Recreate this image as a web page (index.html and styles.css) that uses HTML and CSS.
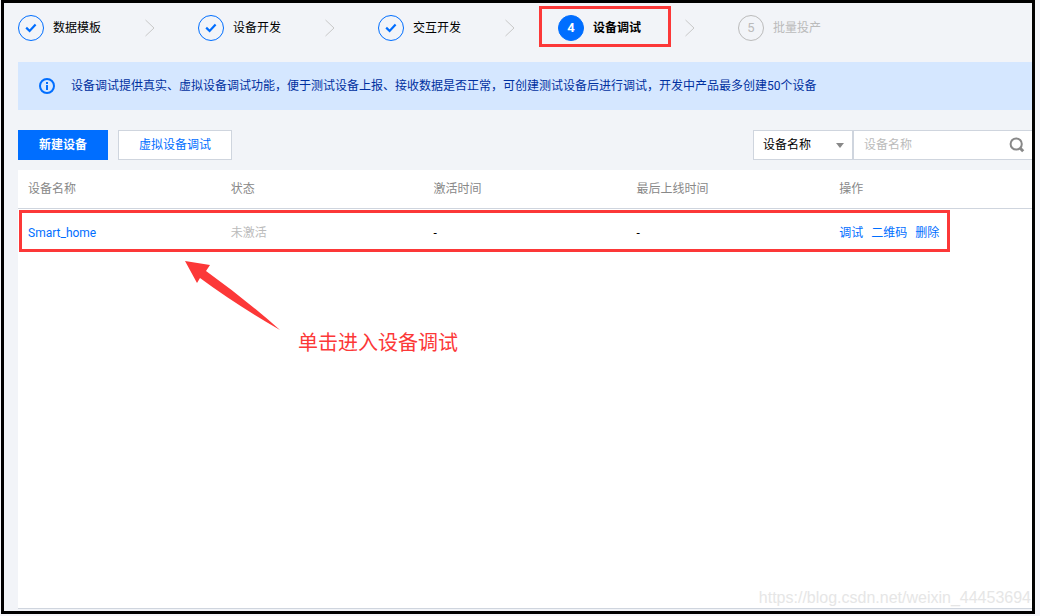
FILE: index.html
```html
<!DOCTYPE html>
<html lang="zh-CN">
<head>
<meta charset="utf-8">
<title>设备调试</title>
<link rel="stylesheet" href="styles.css">
</head>
<body>
<main class="frame">
  <ol class="steps">
    <li class="step done">
      <span class="step-mark"><svg width="12" height="10" viewBox="0 0 12 10"><path d="M1.2 4.6 4.6 8 10.6 1.6"/></svg></span>
      <span class="step-name">数据模板</span>
      <svg class="chevron" width="10" height="18" viewBox="0 0 10 18"><path d="M0.5 1 9 9 0.5 17"/></svg>
    </li>
    <li class="step done">
      <span class="step-mark"><svg width="12" height="10" viewBox="0 0 12 10"><path d="M1.2 4.6 4.6 8 10.6 1.6"/></svg></span>
      <span class="step-name">设备开发</span>
      <svg class="chevron" width="10" height="18" viewBox="0 0 10 18"><path d="M0.5 1 9 9 0.5 17"/></svg>
    </li>
    <li class="step done">
      <span class="step-mark"><svg width="12" height="10" viewBox="0 0 12 10"><path d="M1.2 4.6 4.6 8 10.6 1.6"/></svg></span>
      <span class="step-name">交互开发</span>
      <svg class="chevron" width="10" height="18" viewBox="0 0 10 18"><path d="M0.5 1 9 9 0.5 17"/></svg>
    </li>
    <li class="step current">
      <span class="step-mark">4</span>
      <span class="step-name">设备调试</span>
      <svg class="chevron" width="10" height="18" viewBox="0 0 10 18"><path d="M0.5 1 9 9 0.5 17"/></svg>
    </li>
    <li class="step pending">
      <span class="step-mark">5</span>
      <span class="step-name">批量投产</span>
    </li>
  </ol>

  <div class="notice">
    <svg class="notice-icon" width="16" height="16" viewBox="0 0 16 16"><circle cx="8" cy="8" r="7"/><path d="M8 4v2M8 7v5"/></svg>
    <p class="notice-text">设备调试提供真实、虚拟设备调试功能，便于测试设备上报、接收数据是否正常，可创建测试设备后进行调试，开发中产品最多创建50个设备</p>
  </div>

  <div class="toolbar">
    <button class="btn primary" type="button">新建设备</button>
    <button class="btn" type="button">虚拟设备调试</button>
    <form class="search">
      <div class="search-field">
        <select class="search-select" aria-label="搜索字段"><option>设备名称</option></select>
        <svg class="caret" width="8" height="5" viewBox="0 0 8 5"><path d="M0 0h8L4 5z"/></svg>
      </div>
      <div class="search-box">
        <input class="search-input" type="text" placeholder="设备名称" aria-label="设备名称">
        <button class="search-btn" type="button" aria-label="搜索"><svg width="16" height="16" viewBox="0 0 16 16"><circle cx="7.2" cy="7" r="5.6"/><path class="handle" d="M11 11 14.2 14.2"/></svg></button>
      </div>
    </form>
  </div>

  <section class="card">
    <table class="devices">
      <thead>
        <tr><th>设备名称</th><th>状态</th><th>激活时间</th><th>最后上线时间</th><th>操作</th></tr>
      </thead>
      <tbody>
        <tr>
          <td><a href="#">Smart_home</a></td>
          <td class="inactive">未激活</td>
          <td>-</td>
          <td>-</td>
          <td><span class="actions"><a href="#">调试</a><a href="#">二维码</a><a href="#">删除</a></span></td>
        </tr>
      </tbody>
    </table>
    <div class="row-highlight"></div>
    <div class="hint">
      <svg class="hint-arrow" width="96" height="70" viewBox="0 0 96 70"><path d="M0 0 25 4 21 10 Q60 38 95 69 Q50 43 15 17L12 22z"/></svg>
      <p class="hint-text">单击进入设备调试</p>
    </div>
    <p class="watermark">https://blog.csdn.net/weixin_44453694</p>
  </section>
</main>
</body>
</html>
```
FILE: styles.css
```css
* {
  box-sizing: border-box;
}

body {
  margin: 0;
  padding: 0 5px 2px 1px;
  min-height: 100vh;
  display: flex;
  background: #f5f6fa;
  color: #000;
  font: 12px/18px Roboto, "Noto Sans CJK SC", sans-serif;
}

p {
  margin: 0;
}

a {
  color: #006eff;
  text-decoration: none;
}

button,
input,
select {
  font: inherit;
}

.frame {
  flex: 1;
  min-width: 0;
  display: flex;
  flex-direction: column;
  border: 3px solid #000;
  padding: 12px 0 2px 14px;
  background: #f2f4f8;
}

/* Steps */
.steps {
  display: flex;
  margin: 0 0 21px;
  padding: 0;
  list-style: none;
}

.step {
  position: relative;
  flex: 0 0 180px;
  display: flex;
  align-items: center;
}

.step-mark {
  width: 26px;
  height: 26px;
  display: flex;
  align-items: center;
  justify-content: center;
  margin-right: 9px;
  border: 1px solid #006eff;
  border-radius: 50%;
  font-size: 13px;
}

.step-mark path {
  fill: none;
  stroke: #006eff;
  stroke-width: 2.2;
}

.chevron {
  margin-left: auto;
  margin-right: 43px;
  fill: none;
  stroke: #c8c8c8;
}

.current .step-mark {
  background: #006eff;
  color: #fff;
  font-weight: 700;
}

.current .step-name {
  font-weight: 700;
}

.current::after {
  content: "";
  position: absolute;
  inset: -9px 67px -6px -19px;
  border: 3px solid #fc3838;
}

.pending {
  color: #bbb;
}

.pending .step-mark {
  border-color: #bbb;
}

/* Notice */
.notice {
  display: flex;
  align-items: center;
  gap: 16px;
  padding: 15px 21px;
  background: #d5e7ff;
  color: #0030a0;
}

.notice-icon {
  flex: none;
  fill: none;
  stroke: #006eff;
  stroke-width: 2;
}

/* Toolbar */
.toolbar {
  display: flex;
  gap: 10px;
  margin: 20px 0 10px;
}

.btn {
  height: 30px;
  padding: 0 20px;
  border: 1px solid #cfd5de;
  background: #fff;
  color: #006eff;
}

.primary {
  border-color: #006eff;
  background: #006eff;
  color: #fff;
  font-weight: 700;
}

.search {
  display: flex;
  margin-left: auto;
}

.search-field {
  position: relative;
  width: 100px;
}

.search-select {
  appearance: none;
  width: 100%;
  height: 30px;
  padding: 0 9px;
  border: 1px solid #cfd5de;
  border-radius: 0;
  background: #fff;
  color: #000;
}

.caret {
  position: absolute;
  right: 9px;
  top: 13px;
  fill: #888;
  pointer-events: none;
}

.search-box {
  display: flex;
  align-items: center;
  width: 179px;
  height: 30px;
  border: 1px solid #cfd5de;
  border-right: 0;
  background: #fff;
}

.search-input {
  flex: 1;
  min-width: 0;
  padding: 0 10px;
  border: 0;
  outline: 0;
  background: none;
}

.search-input::placeholder {
  color: #bbb;
}

.search-btn {
  display: flex;
  margin-right: 7px;
  padding: 0;
  border: 0;
  background: none;
}

.search-btn svg {
  fill: none;
  stroke: #888;
  stroke-width: 2;
}

.search-btn .handle {
  stroke-width: 3;
}

/* Device table */
.card {
  position: relative;
  flex: 1;
  border-bottom: 1px solid #cfd5de;
  background: #fff;
}

.devices {
  width: 100%;
  table-layout: fixed;
  border-collapse: collapse;
}

.devices th,
.devices td {
  padding: 10px;
  text-align: left;
}

.devices th {
  border-bottom: 1px solid #cfd5de;
  color: #888;
  font-weight: 400;
}

.devices td {
  padding: 15px 10px;
}

.devices .inactive {
  color: #bbb;
}

.actions {
  display: flex;
  gap: 8px;
  white-space: nowrap;
}

/* Annotations */
.row-highlight {
  position: absolute;
  top: 40px;
  left: 1px;
  width: 931px;
  height: 42px;
  border: 3px solid #fc3838;
  pointer-events: none;
}

.hint {
  position: absolute;
  top: 91px;
  left: 167px;
  display: flex;
  align-items: flex-end;
  gap: 17px;
  color: #fc3838;
}

.hint-arrow {
  fill: #fc3838;
}

.hint-text {
  margin-bottom: -26px;
  font-size: 20px;
  line-height: 28px;
}

.watermark {
  position: absolute;
  right: 1px;
  bottom: 0;
  color: #e6e6e6;
  font: 16px/20px "Liberation Sans", sans-serif;
}
```
